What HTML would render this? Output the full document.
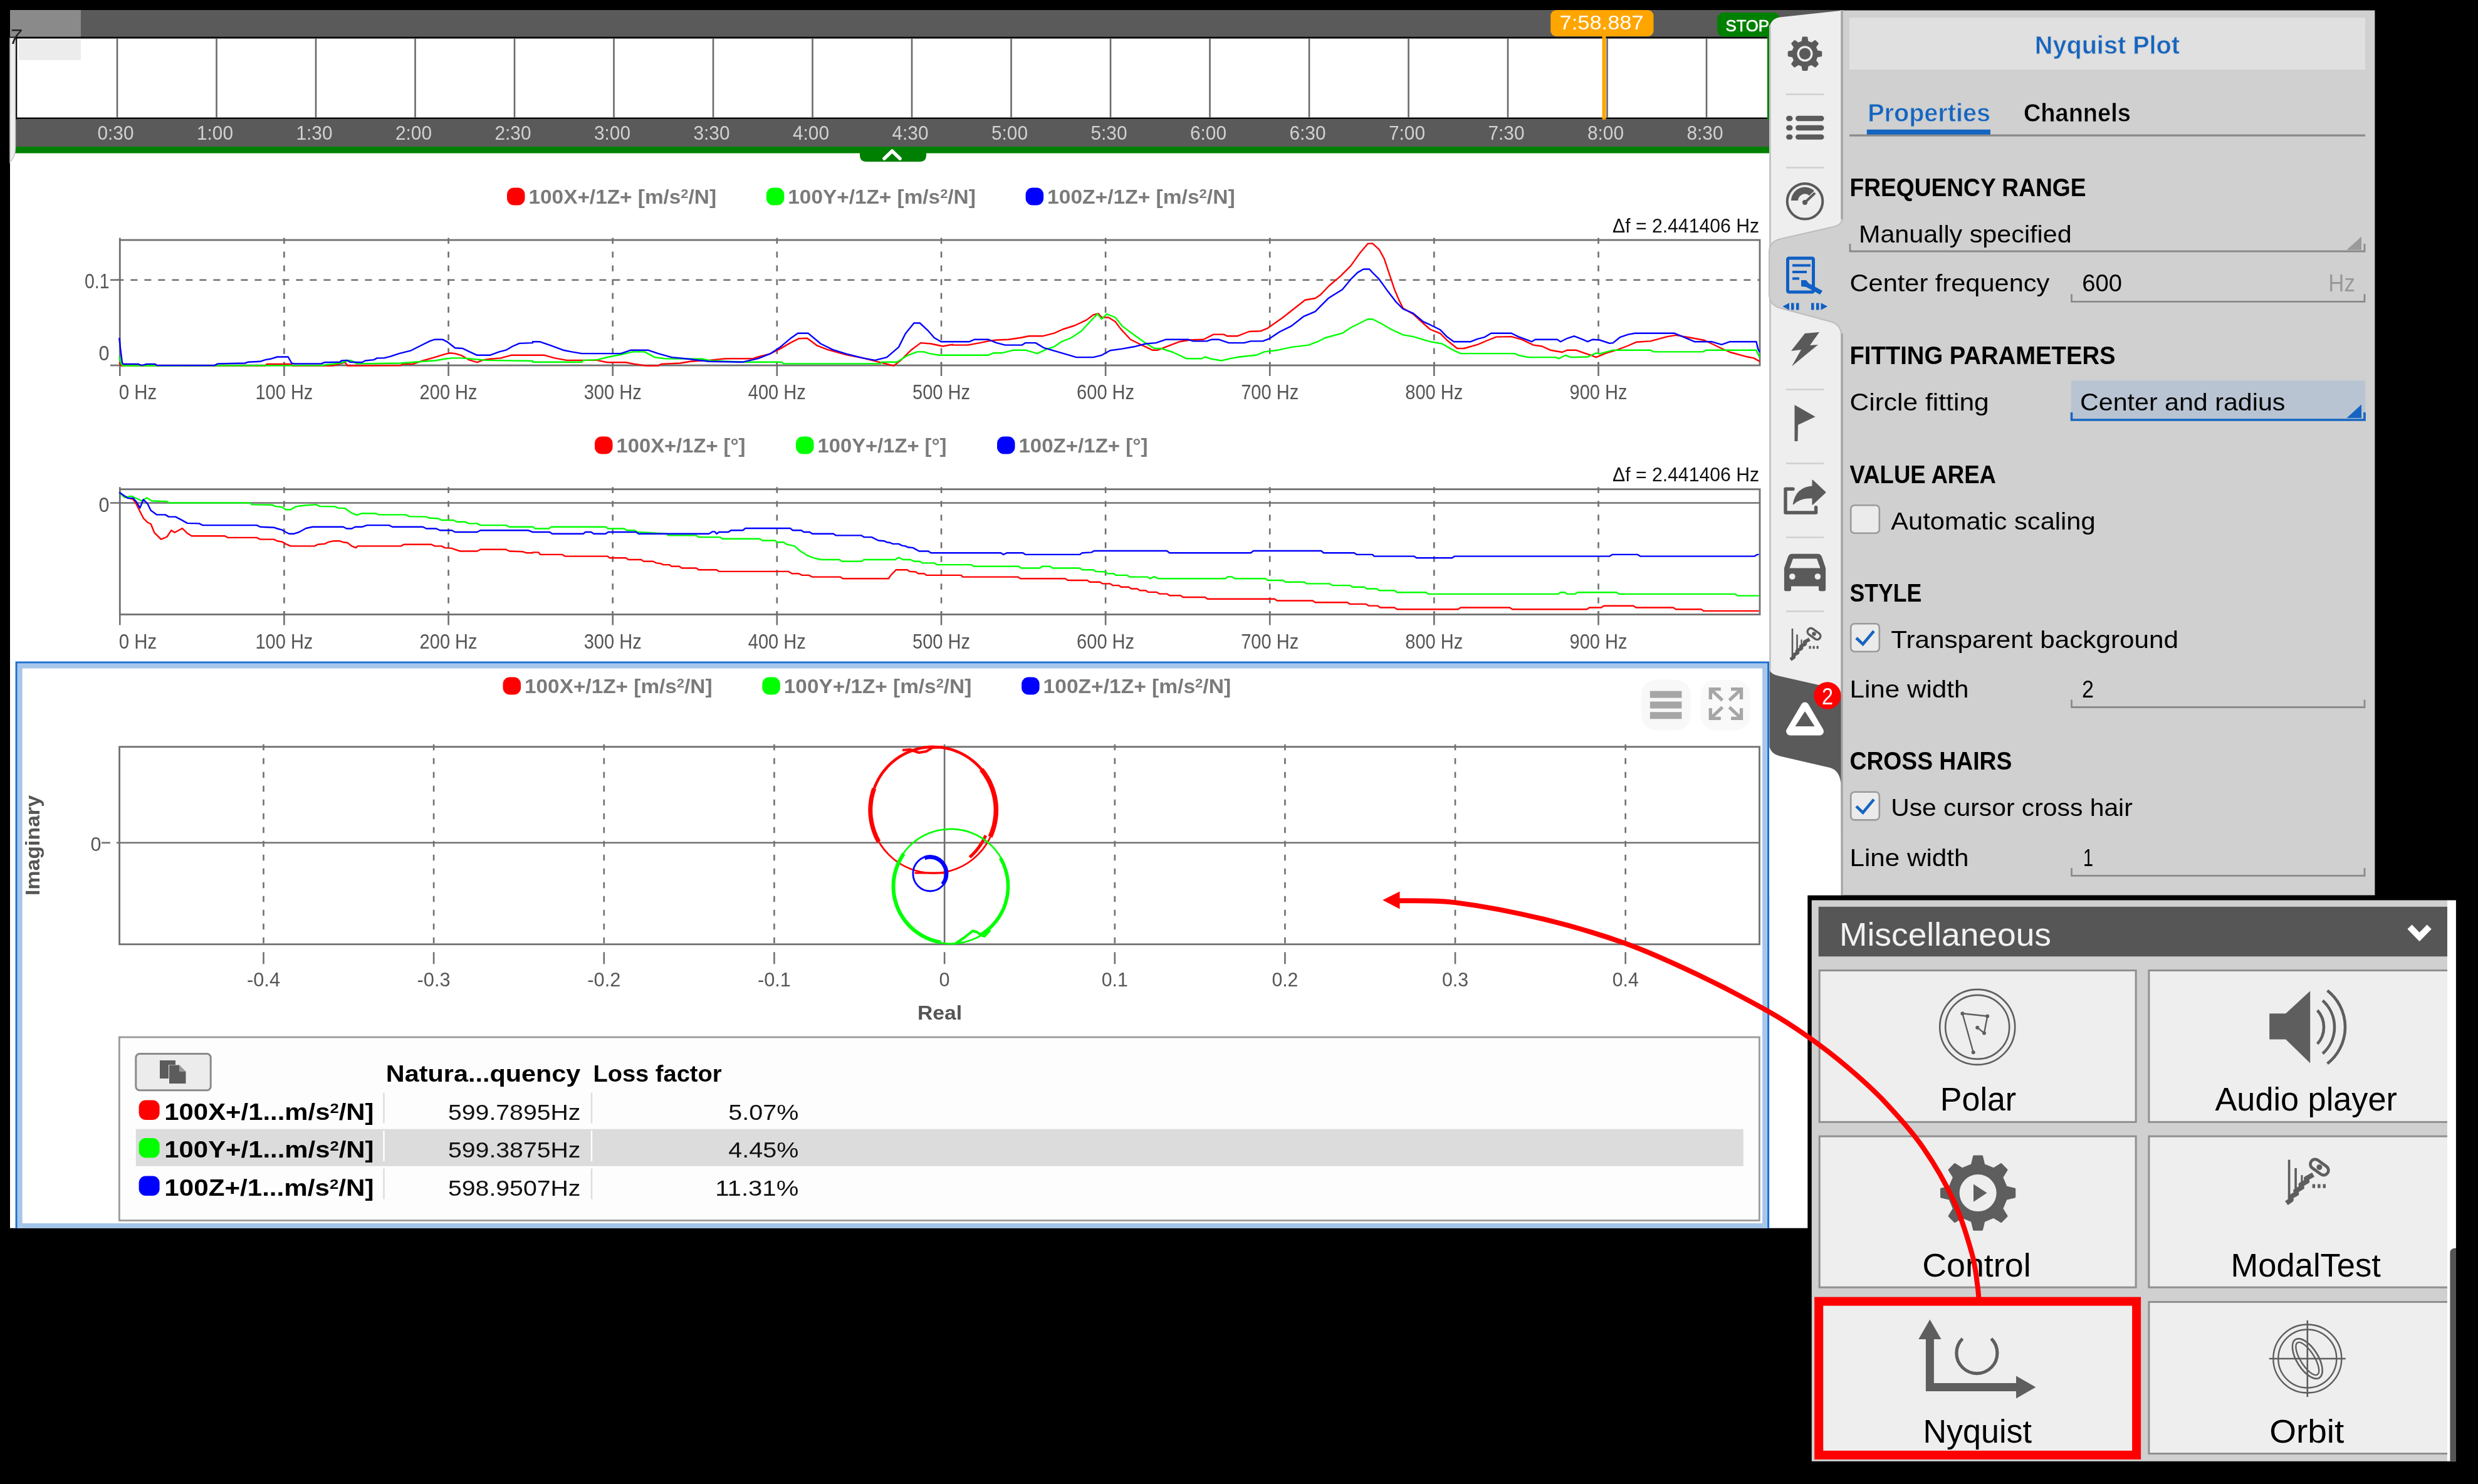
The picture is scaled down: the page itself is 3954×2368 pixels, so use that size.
<!DOCTYPE html>
<html><head><meta charset="utf-8"><title>Nyquist Plot</title>
<style>
html,body{margin:0;padding:0;background:#000;}
body{width:3954px;height:2368px;overflow:hidden;}
svg{display:block;font-family:"Liberation Sans",sans-serif;filter:blur(0.75px);}
</style></head><body>
<svg width="3954" height="2368" viewBox="0 0 3954 2368">
<defs><clipPath id="c1"><rect x="189" y="381" width="2620.5" height="204"/></clipPath></defs>
<rect x="0" y="0" width="3954" height="2368" fill="#000"/>
<rect x="16.0" y="16.0" width="2870.0" height="1943.7" fill="#ffffff" />
<rect x="16.0" y="16.0" width="2925.0" height="43.0" fill="#5a5a5a" />
<rect x="16.0" y="16.0" width="113.0" height="44.0" fill="#8a8a8a" />
<rect x="16.0" y="58.7" width="2810.0" height="2.8" fill="#000" />
<rect x="24.5" y="58.7" width="2.8" height="132.0" fill="#000" />
<rect x="30.0" y="63.0" width="99.0" height="33.0" fill="#ececec" />
<rect x="16.0" y="187.5" width="2810.0" height="3.0" fill="#000" />
<rect x="16.0" y="190.5" width="2810.0" height="44.0" fill="#5a5a5a" />
<rect x="16.0" y="234.0" width="2810.0" height="10.5" fill="#008000" />
<path d="M16,61 H24.5 V236 Q24.5,250 16,259 Z" fill="#eeeeee" stroke="#c8c8c8" stroke-width="1.5" />
<line x1="187.0" y1="61.5" x2="187.0" y2="187.5" stroke="#6a6a6a" stroke-width="2.6" />
<text x="184.5" y="223.0" font-size="31" fill="#d2d2d2" text-anchor="middle" textLength="58.0" lengthAdjust="spacingAndGlyphs" >0:30</text>
<line x1="345.5" y1="61.5" x2="345.5" y2="187.5" stroke="#6a6a6a" stroke-width="2.6" />
<text x="343.0" y="223.0" font-size="31" fill="#d2d2d2" text-anchor="middle" textLength="58.0" lengthAdjust="spacingAndGlyphs" >1:00</text>
<line x1="504.0" y1="61.5" x2="504.0" y2="187.5" stroke="#6a6a6a" stroke-width="2.6" />
<text x="501.5" y="223.0" font-size="31" fill="#d2d2d2" text-anchor="middle" textLength="58.0" lengthAdjust="spacingAndGlyphs" >1:30</text>
<line x1="662.5" y1="61.5" x2="662.5" y2="187.5" stroke="#6a6a6a" stroke-width="2.6" />
<text x="660.0" y="223.0" font-size="31" fill="#d2d2d2" text-anchor="middle" textLength="58.0" lengthAdjust="spacingAndGlyphs" >2:00</text>
<line x1="821.0" y1="61.5" x2="821.0" y2="187.5" stroke="#6a6a6a" stroke-width="2.6" />
<text x="818.5" y="223.0" font-size="31" fill="#d2d2d2" text-anchor="middle" textLength="58.0" lengthAdjust="spacingAndGlyphs" >2:30</text>
<line x1="979.5" y1="61.5" x2="979.5" y2="187.5" stroke="#6a6a6a" stroke-width="2.6" />
<text x="977.0" y="223.0" font-size="31" fill="#d2d2d2" text-anchor="middle" textLength="58.0" lengthAdjust="spacingAndGlyphs" >3:00</text>
<line x1="1138.0" y1="61.5" x2="1138.0" y2="187.5" stroke="#6a6a6a" stroke-width="2.6" />
<text x="1135.5" y="223.0" font-size="31" fill="#d2d2d2" text-anchor="middle" textLength="58.0" lengthAdjust="spacingAndGlyphs" >3:30</text>
<line x1="1296.5" y1="61.5" x2="1296.5" y2="187.5" stroke="#6a6a6a" stroke-width="2.6" />
<text x="1294.0" y="223.0" font-size="31" fill="#d2d2d2" text-anchor="middle" textLength="58.0" lengthAdjust="spacingAndGlyphs" >4:00</text>
<line x1="1455.0" y1="61.5" x2="1455.0" y2="187.5" stroke="#6a6a6a" stroke-width="2.6" />
<text x="1452.5" y="223.0" font-size="31" fill="#d2d2d2" text-anchor="middle" textLength="58.0" lengthAdjust="spacingAndGlyphs" >4:30</text>
<line x1="1613.5" y1="61.5" x2="1613.5" y2="187.5" stroke="#6a6a6a" stroke-width="2.6" />
<text x="1611.0" y="223.0" font-size="31" fill="#d2d2d2" text-anchor="middle" textLength="58.0" lengthAdjust="spacingAndGlyphs" >5:00</text>
<line x1="1772.0" y1="61.5" x2="1772.0" y2="187.5" stroke="#6a6a6a" stroke-width="2.6" />
<text x="1769.5" y="223.0" font-size="31" fill="#d2d2d2" text-anchor="middle" textLength="58.0" lengthAdjust="spacingAndGlyphs" >5:30</text>
<line x1="1930.5" y1="61.5" x2="1930.5" y2="187.5" stroke="#6a6a6a" stroke-width="2.6" />
<text x="1928.0" y="223.0" font-size="31" fill="#d2d2d2" text-anchor="middle" textLength="58.0" lengthAdjust="spacingAndGlyphs" >6:00</text>
<line x1="2089.0" y1="61.5" x2="2089.0" y2="187.5" stroke="#6a6a6a" stroke-width="2.6" />
<text x="2086.5" y="223.0" font-size="31" fill="#d2d2d2" text-anchor="middle" textLength="58.0" lengthAdjust="spacingAndGlyphs" >6:30</text>
<line x1="2247.5" y1="61.5" x2="2247.5" y2="187.5" stroke="#6a6a6a" stroke-width="2.6" />
<text x="2245.0" y="223.0" font-size="31" fill="#d2d2d2" text-anchor="middle" textLength="58.0" lengthAdjust="spacingAndGlyphs" >7:00</text>
<line x1="2406.0" y1="61.5" x2="2406.0" y2="187.5" stroke="#6a6a6a" stroke-width="2.6" />
<text x="2403.5" y="223.0" font-size="31" fill="#d2d2d2" text-anchor="middle" textLength="58.0" lengthAdjust="spacingAndGlyphs" >7:30</text>
<line x1="2564.5" y1="61.5" x2="2564.5" y2="187.5" stroke="#6a6a6a" stroke-width="2.6" />
<text x="2562.0" y="223.0" font-size="31" fill="#d2d2d2" text-anchor="middle" textLength="58.0" lengthAdjust="spacingAndGlyphs" >8:00</text>
<line x1="2723.0" y1="61.5" x2="2723.0" y2="187.5" stroke="#6a6a6a" stroke-width="2.6" />
<text x="2720.5" y="223.0" font-size="31" fill="#d2d2d2" text-anchor="middle" textLength="58.0" lengthAdjust="spacingAndGlyphs" >8:30</text>
<text x="15.0" y="70.0" font-size="34" fill="#222" font-style="italic">7</text>
<rect x="2474.2" y="16.0" width="164.3" height="42.0" fill="#ffa500" rx="9" />
<rect x="2556.5" y="56.0" width="6.1" height="134.5" fill="#ffa500" />
<text x="2488.5" y="47.3" font-size="30.5" fill="#fff" textLength="134.2" lengthAdjust="spacingAndGlyphs" >7:58.887</text>
<rect x="2740.0" y="20.0" width="100.0" height="38.5" fill="#008000" rx="10" />
<text x="2753.5" y="50.0" font-size="25.5" fill="#fff" textLength="69.5" lengthAdjust="spacingAndGlyphs" stroke="#fff" stroke-width="0.7">STOP</text>
<rect x="2819.9" y="58.7" width="3.1" height="131.8" fill="#008000" />
<path d="M1372,240 H1478 V248 Q1478,258 1468,258 H1382 Q1372,258 1372,248 Z" fill="#008000" />
<path d="M1411,253 L1423.5,241 L1436,253" fill="none" stroke="#fff" stroke-width="5.5" stroke-linecap="round" stroke-linejoin="round"/>
<rect x="809.0" y="299.5" width="28.5" height="28.0" fill="#ff0000" rx="11" />
<text x="843.5" y="324.5" font-size="32" fill="#7a7a7a" font-weight="bold" textLength="299.5" lengthAdjust="spacingAndGlyphs" >100X+/1Z+ [m/s<tspan dy="-9" font-size="21">2</tspan><tspan dy="9">/N]</tspan></text>
<rect x="1222.8" y="299.5" width="28.5" height="28.0" fill="#00ff00" rx="11" />
<text x="1257.3" y="324.5" font-size="32" fill="#7a7a7a" font-weight="bold" textLength="299.5" lengthAdjust="spacingAndGlyphs" >100Y+/1Z+ [m/s<tspan dy="-9" font-size="21">2</tspan><tspan dy="9">/N]</tspan></text>
<rect x="1636.6" y="299.5" width="28.5" height="28.0" fill="#0000ff" rx="11" />
<text x="1671.1" y="324.5" font-size="32" fill="#7a7a7a" font-weight="bold" textLength="299.5" lengthAdjust="spacingAndGlyphs" >100Z+/1Z+ [m/s<tspan dy="-9" font-size="21">2</tspan><tspan dy="9">/N]</tspan></text>
<rect x="949.0" y="696.5" width="28.5" height="28.0" fill="#ff0000" rx="11" />
<text x="983.5" y="721.5" font-size="32" fill="#7a7a7a" font-weight="bold" textLength="206.0" lengthAdjust="spacingAndGlyphs" >100X+/1Z+ [°]</text>
<rect x="1270.0" y="696.5" width="28.5" height="28.0" fill="#00ff00" rx="11" />
<text x="1304.5" y="721.5" font-size="32" fill="#7a7a7a" font-weight="bold" textLength="206.0" lengthAdjust="spacingAndGlyphs" >100Y+/1Z+ [°]</text>
<rect x="1591.0" y="696.5" width="28.5" height="28.0" fill="#0000ff" rx="11" />
<text x="1625.5" y="721.5" font-size="32" fill="#7a7a7a" font-weight="bold" textLength="206.0" lengthAdjust="spacingAndGlyphs" >100Z+/1Z+ [°]</text>
<rect x="802.5" y="1080.5" width="28.5" height="28.0" fill="#ff0000" rx="11" />
<text x="837.0" y="1105.5" font-size="32" fill="#7a7a7a" font-weight="bold" textLength="299.5" lengthAdjust="spacingAndGlyphs" >100X+/1Z+ [m/s<tspan dy="-9" font-size="21">2</tspan><tspan dy="9">/N]</tspan></text>
<rect x="1216.3" y="1080.5" width="28.5" height="28.0" fill="#00ff00" rx="11" />
<text x="1250.8" y="1105.5" font-size="32" fill="#7a7a7a" font-weight="bold" textLength="299.5" lengthAdjust="spacingAndGlyphs" >100Y+/1Z+ [m/s<tspan dy="-9" font-size="21">2</tspan><tspan dy="9">/N]</tspan></text>
<rect x="1630.1" y="1080.5" width="28.5" height="28.0" fill="#0000ff" rx="11" />
<text x="1664.6" y="1105.5" font-size="32" fill="#7a7a7a" font-weight="bold" textLength="299.5" lengthAdjust="spacingAndGlyphs" >100Z+/1Z+ [m/s<tspan dy="-9" font-size="21">2</tspan><tspan dy="9">/N]</tspan></text>
<line x1="453.4" y1="379.5" x2="453.4" y2="583.0" stroke="#707070" stroke-width="2.6" stroke-dasharray="9.5 12.5" />
<line x1="453.4" y1="578.0" x2="453.4" y2="600.0" stroke="#707070" stroke-width="2.6" />
<line x1="715.6" y1="379.5" x2="715.6" y2="583.0" stroke="#707070" stroke-width="2.6" stroke-dasharray="9.5 12.5" />
<line x1="715.6" y1="578.0" x2="715.6" y2="600.0" stroke="#707070" stroke-width="2.6" />
<line x1="977.7" y1="379.5" x2="977.7" y2="583.0" stroke="#707070" stroke-width="2.6" stroke-dasharray="9.5 12.5" />
<line x1="977.7" y1="578.0" x2="977.7" y2="600.0" stroke="#707070" stroke-width="2.6" />
<line x1="1239.8" y1="379.5" x2="1239.8" y2="583.0" stroke="#707070" stroke-width="2.6" stroke-dasharray="9.5 12.5" />
<line x1="1239.8" y1="578.0" x2="1239.8" y2="600.0" stroke="#707070" stroke-width="2.6" />
<line x1="1502.0" y1="379.5" x2="1502.0" y2="583.0" stroke="#707070" stroke-width="2.6" stroke-dasharray="9.5 12.5" />
<line x1="1502.0" y1="578.0" x2="1502.0" y2="600.0" stroke="#707070" stroke-width="2.6" />
<line x1="1764.1" y1="379.5" x2="1764.1" y2="583.0" stroke="#707070" stroke-width="2.6" stroke-dasharray="9.5 12.5" />
<line x1="1764.1" y1="578.0" x2="1764.1" y2="600.0" stroke="#707070" stroke-width="2.6" />
<line x1="2026.2" y1="379.5" x2="2026.2" y2="583.0" stroke="#707070" stroke-width="2.6" stroke-dasharray="9.5 12.5" />
<line x1="2026.2" y1="578.0" x2="2026.2" y2="600.0" stroke="#707070" stroke-width="2.6" />
<line x1="2288.3" y1="379.5" x2="2288.3" y2="583.0" stroke="#707070" stroke-width="2.6" stroke-dasharray="9.5 12.5" />
<line x1="2288.3" y1="578.0" x2="2288.3" y2="600.0" stroke="#707070" stroke-width="2.6" />
<line x1="2550.5" y1="379.5" x2="2550.5" y2="583.0" stroke="#707070" stroke-width="2.6" stroke-dasharray="9.5 12.5" />
<line x1="2550.5" y1="578.0" x2="2550.5" y2="600.0" stroke="#707070" stroke-width="2.6" />
<line x1="191.3" y1="583.0" x2="191.3" y2="600.0" stroke="#707070" stroke-width="2.6" />
<line x1="191.3" y1="379.5" x2="191.3" y2="383.0" stroke="#707070" stroke-width="2.6" />
<line x1="186.4" y1="446.7" x2="2808.0" y2="446.7" stroke="#707070" stroke-width="2.6" stroke-dasharray="11 11" />
<line x1="176.0" y1="446.7" x2="191.3" y2="446.7" stroke="#707070" stroke-width="2.6" />
<rect x="191.3" y="383" width="2616.7" height="200" fill="none" stroke="#707070" stroke-width="2.8"/>
<text x="189.8" y="637.0" font-size="33" fill="#555" textLength="60.5" lengthAdjust="spacingAndGlyphs" >0 Hz</text>
<text x="453.4" y="637.0" font-size="33" fill="#555" text-anchor="middle" textLength="92.0" lengthAdjust="spacingAndGlyphs" >100 Hz</text>
<text x="715.6" y="637.0" font-size="33" fill="#555" text-anchor="middle" textLength="92.0" lengthAdjust="spacingAndGlyphs" >200 Hz</text>
<text x="977.7" y="637.0" font-size="33" fill="#555" text-anchor="middle" textLength="92.0" lengthAdjust="spacingAndGlyphs" >300 Hz</text>
<text x="1239.8" y="637.0" font-size="33" fill="#555" text-anchor="middle" textLength="92.0" lengthAdjust="spacingAndGlyphs" >400 Hz</text>
<text x="1502.0" y="637.0" font-size="33" fill="#555" text-anchor="middle" textLength="92.0" lengthAdjust="spacingAndGlyphs" >500 Hz</text>
<text x="1764.1" y="637.0" font-size="33" fill="#555" text-anchor="middle" textLength="92.0" lengthAdjust="spacingAndGlyphs" >600 Hz</text>
<text x="2026.2" y="637.0" font-size="33" fill="#555" text-anchor="middle" textLength="92.0" lengthAdjust="spacingAndGlyphs" >700 Hz</text>
<text x="2288.3" y="637.0" font-size="33" fill="#555" text-anchor="middle" textLength="92.0" lengthAdjust="spacingAndGlyphs" >800 Hz</text>
<text x="2550.5" y="637.0" font-size="33" fill="#555" text-anchor="middle" textLength="92.0" lengthAdjust="spacingAndGlyphs" >900 Hz</text>
<line x1="176.0" y1="583.0" x2="191.3" y2="583.0" stroke="#707070" stroke-width="2.6" />
<text x="174.5" y="459.5" font-size="33" fill="#555" text-anchor="end" textLength="39.5" lengthAdjust="spacingAndGlyphs" >0.1</text>
<text x="174.5" y="574.5" font-size="33" fill="#555" text-anchor="end" textLength="17.0" lengthAdjust="spacingAndGlyphs" >0</text>
<text x="2807.0" y="370.8" font-size="32" fill="#111" text-anchor="end" textLength="234.0" lengthAdjust="spacingAndGlyphs" >Δf = 2.441406 Hz</text>
<g clip-path="url(#c1)">
<polyline points="190.3,578.2 193.5,583.6 423.3,583.6 426.0,580.9 463.9,580.9 466.6,583.6 531.5,583.6 542.3,580.9 550.4,578.2 554.5,583.6 639.6,583.1 642.3,580.9 658.6,580.9 674.8,575.5 693.7,570.1 709.9,565.2 718.1,563.3 726.2,564.1 737.0,567.4 747.8,574.1 761.3,578.2 772.1,574.1 782.9,572.8 799.2,571.4 815.4,566.8 850.0,566.8 850.0,566.8 868.9,566.8 885.1,571.4 904.1,574.9 952.7,574.9 969.0,578.2 998.7,578.2 1012.2,580.9 1031.2,583.6 1050.1,583.6 1055.5,580.9 1085.2,579.5 1101.5,576.8 1131.2,574.9 1158.2,572.2 1201.5,572.2 1209.6,569.5 1228.5,564.7 1244.8,556.6 1261.0,547.1 1274.5,540.3 1288.0,539.8 1304.2,551.7 1320.5,557.9 1350.2,566.0 1377.2,571.4 1398.9,576.8 1415.1,580.9 1425.9,583.6 1436.7,575.5 1452.9,559.3 1469.2,547.1 1485.4,548.5 1504.3,552.5 1520.0,549.8 1520.0,550.6 1544.3,550.6 1563.3,547.1 1576.8,544.4 1590.3,542.5 1609.2,541.7 1628.2,539.0 1641.7,536.3 1663.3,536.3 1682.2,531.7 1695.7,525.5 1714.7,519.5 1733.6,510.6 1744.4,502.5 1752.5,500.3 1757.9,506.5 1768.7,506.5 1779.6,513.3 1787.7,524.1 1803.9,541.7 1820.1,549.8 1839.0,558.7 1847.2,558.7 1860.7,553.3 1882.3,545.2 1898.5,542.5 1920.2,541.7 1936.4,533.6 1952.6,533.6 1958.0,536.3 1974.2,536.3 1993.2,529.0 2012.1,528.2 2022.9,523.6 2047.2,506.5 2060.8,495.7 2082.4,478.7 2098.6,476.0 2106.7,470.6 2120.2,456.5 2139.2,440.3 2155.4,424.1 2168.9,405.1 2182.4,388.9 2190.0,388.4 2190.0,388.4 2200.8,398.4 2208.9,413.3 2217.0,437.6 2225.1,461.9 2233.3,480.9 2238.7,491.7 2254.9,501.1 2271.1,516.0 2281.9,525.5 2298.2,532.2 2309.0,543.0 2325.2,556.0 2336.0,556.0 2357.6,549.8 2373.9,543.0 2387.4,537.6 2411.7,537.1 2427.9,541.7 2446.9,550.6 2460.4,552.5 2473.9,558.7 2492.8,562.0 2500.9,558.7 2514.5,558.7 2528.0,563.3 2538.8,566.8 2546.9,570.1 2563.1,563.3 2579.3,558.7 2595.6,552.5 2611.8,545.7 2633.4,544.4 2660.5,537.1 2674.0,534.9 2698.3,539.0 2719.9,543.0 2747.0,556.0 2760.5,562.0 2784.8,568.7 2798.4,571.4 2807.8,576.8" fill="none" stroke="#ff0000" stroke-width="2.4" stroke-linejoin="round" />
<polyline points="190.3,568.7 193.5,580.9 196.2,583.6 512.6,583.1 542.3,579.5 558.5,574.9 563.9,576.8 569.3,580.4 639.6,579.5 674.8,576.8 693.7,575.5 709.9,572.8 720.8,571.4 737.0,571.4 747.8,572.2 774.8,574.9 850.0,576.0 850.0,577.7 928.4,577.7 931.1,574.9 952.7,574.1 971.7,569.5 996.0,564.7 1009.5,561.4 1028.5,561.4 1044.7,570.1 1060.9,572.2 1120.4,572.8 1133.9,575.5 1185.3,577.7 1247.5,577.7 1250.2,580.4 1404.3,580.4 1407.0,577.7 1431.3,577.7 1447.5,567.4 1463.8,561.4 1474.6,561.4 1482.7,564.1 1498.9,566.8 1520.0,566.8 1520.0,566.8 1576.8,566.8 1584.9,563.3 1598.4,563.3 1617.3,558.7 1636.3,558.7 1655.2,564.1 1671.4,556.6 1682.2,553.3 1693.0,545.7 1709.3,539.0 1725.5,528.2 1741.7,510.6 1751.2,501.1 1757.9,509.2 1766.0,501.1 1779.6,506.5 1790.4,520.1 1806.6,532.2 1825.5,545.7 1841.8,556.0 1852.6,556.0 1871.5,562.0 1893.1,572.2 1917.5,572.2 1922.9,569.5 1931.0,572.2 1948.6,575.5 1963.4,572.2 1976.9,569.5 2004.0,566.8 2017.5,561.4 2039.1,558.7 2060.8,553.9 2087.8,550.6 2101.3,545.7 2114.8,539.0 2141.9,531.7 2155.4,522.8 2168.9,516.0 2182.4,509.2 2190.0,509.2 2190.0,509.2 2203.5,516.0 2219.7,525.5 2238.7,534.4 2254.9,537.1 2281.9,545.2 2300.9,548.5 2317.1,557.9 2330.6,564.1 2417.1,564.1 2422.5,566.8 2438.7,570.1 2482.0,570.1 2487.4,572.2 2498.2,566.8 2506.3,570.1 2533.4,569.5 2546.9,563.3 2552.3,564.7 2573.9,558.7 2633.4,558.7 2638.8,561.4 2717.2,561.4 2722.6,558.7 2802.4,558.7 2805.1,564.7 2807.8,570.1" fill="none" stroke="#00ff00" stroke-width="2.4" stroke-linejoin="round" />
<polyline points="190.3,539.0 192.2,556.6 194.9,578.2 196.2,580.9 220.6,580.9 226.0,583.1 234.1,580.9 247.6,580.9 250.3,583.1 342.2,583.1 347.6,580.4 390.9,579.5 396.3,577.7 415.2,576.8 423.3,574.1 431.5,572.8 442.3,569.5 459.8,569.5 465.3,579.5 469.3,580.4 512.6,580.4 518.0,578.2 542.3,577.7 545.0,575.5 554.5,574.9 558.5,577.7 577.5,578.2 582.9,575.5 596.4,574.1 601.8,571.4 612.6,571.4 623.4,568.7 636.9,564.1 655.9,559.3 674.8,549.8 685.6,544.4 693.7,541.7 705.9,541.7 714.0,545.7 726.2,555.2 738.3,556.0 747.8,560.6 761.3,566.8 781.6,566.8 796.5,561.4 807.3,558.7 818.1,552.5 828.9,547.9 850.0,547.1 850.0,545.2 860.8,545.2 877.0,550.6 898.7,558.7 912.2,561.4 928.4,564.1 990.6,564.1 1006.8,558.7 1033.9,558.7 1050.1,564.1 1071.7,570.1 1093.3,572.2 1131.2,576.8 1185.3,577.7 1209.6,572.2 1228.5,564.7 1244.8,553.9 1261.0,540.3 1273.1,531.7 1289.4,531.7 1309.6,548.5 1328.6,557.9 1350.2,564.7 1377.2,571.4 1396.2,574.9 1415.1,570.1 1434.0,553.9 1444.8,532.2 1458.4,515.5 1467.8,515.5 1480.0,526.8 1490.8,539.0 1501.6,545.2 1520.0,545.2 1520.0,545.2 1547.0,545.2 1555.1,541.7 1576.8,541.7 1590.3,547.1 1603.8,550.6 1630.9,550.6 1636.3,547.1 1652.5,547.1 1666.0,555.2 1687.6,561.4 1706.6,566.8 1717.4,570.1 1744.4,570.1 1757.9,566.8 1771.5,559.3 1790.4,556.6 1809.3,553.3 1828.2,548.5 1844.5,547.1 1860.7,541.7 1895.8,541.7 1903.9,544.4 1925.6,544.4 1933.7,541.7 1944.5,541.7 1960.7,547.1 1985.1,547.1 1995.9,544.4 2014.8,544.4 2025.6,540.3 2041.8,529.5 2060.8,520.1 2079.7,505.2 2098.6,497.1 2120.2,475.4 2141.9,461.9 2155.4,445.7 2166.2,434.9 2175.7,429.5 2185.1,429.5 2190.0,434.9 2190.0,434.9 2200.8,445.7 2214.3,464.6 2227.9,482.2 2238.7,493.0 2254.9,499.8 2271.1,513.3 2281.9,518.2 2298.2,526.3 2309.0,537.6 2319.8,545.2 2346.8,545.2 2357.6,540.9 2368.5,538.2 2379.3,531.7 2411.7,531.7 2422.5,537.1 2444.2,545.2 2449.6,541.7 2484.7,541.7 2490.1,545.2 2500.9,539.8 2511.8,536.3 2525.3,541.7 2533.4,545.2 2541.5,541.7 2552.3,542.5 2568.5,547.9 2573.9,547.1 2584.8,538.2 2598.3,533.6 2609.1,531.7 2671.3,531.7 2684.8,537.1 2703.7,545.2 2730.8,545.2 2747.0,549.8 2760.5,545.2 2802.4,545.2 2805.1,556.6 2807.8,562.0" fill="none" stroke="#0000ff" stroke-width="2.4" stroke-linejoin="round" />
</g>
<line x1="453.4" y1="777.2" x2="453.4" y2="980.5" stroke="#707070" stroke-width="2.6" stroke-dasharray="9.5 12.5" />
<line x1="453.4" y1="975.5" x2="453.4" y2="997.5" stroke="#707070" stroke-width="2.6" />
<line x1="715.6" y1="777.2" x2="715.6" y2="980.5" stroke="#707070" stroke-width="2.6" stroke-dasharray="9.5 12.5" />
<line x1="715.6" y1="975.5" x2="715.6" y2="997.5" stroke="#707070" stroke-width="2.6" />
<line x1="977.7" y1="777.2" x2="977.7" y2="980.5" stroke="#707070" stroke-width="2.6" stroke-dasharray="9.5 12.5" />
<line x1="977.7" y1="975.5" x2="977.7" y2="997.5" stroke="#707070" stroke-width="2.6" />
<line x1="1239.8" y1="777.2" x2="1239.8" y2="980.5" stroke="#707070" stroke-width="2.6" stroke-dasharray="9.5 12.5" />
<line x1="1239.8" y1="975.5" x2="1239.8" y2="997.5" stroke="#707070" stroke-width="2.6" />
<line x1="1502.0" y1="777.2" x2="1502.0" y2="980.5" stroke="#707070" stroke-width="2.6" stroke-dasharray="9.5 12.5" />
<line x1="1502.0" y1="975.5" x2="1502.0" y2="997.5" stroke="#707070" stroke-width="2.6" />
<line x1="1764.1" y1="777.2" x2="1764.1" y2="980.5" stroke="#707070" stroke-width="2.6" stroke-dasharray="9.5 12.5" />
<line x1="1764.1" y1="975.5" x2="1764.1" y2="997.5" stroke="#707070" stroke-width="2.6" />
<line x1="2026.2" y1="777.2" x2="2026.2" y2="980.5" stroke="#707070" stroke-width="2.6" stroke-dasharray="9.5 12.5" />
<line x1="2026.2" y1="975.5" x2="2026.2" y2="997.5" stroke="#707070" stroke-width="2.6" />
<line x1="2288.3" y1="777.2" x2="2288.3" y2="980.5" stroke="#707070" stroke-width="2.6" stroke-dasharray="9.5 12.5" />
<line x1="2288.3" y1="975.5" x2="2288.3" y2="997.5" stroke="#707070" stroke-width="2.6" />
<line x1="2550.5" y1="777.2" x2="2550.5" y2="980.5" stroke="#707070" stroke-width="2.6" stroke-dasharray="9.5 12.5" />
<line x1="2550.5" y1="975.5" x2="2550.5" y2="997.5" stroke="#707070" stroke-width="2.6" />
<line x1="191.3" y1="980.5" x2="191.3" y2="997.5" stroke="#707070" stroke-width="2.6" />
<line x1="191.3" y1="777.2" x2="191.3" y2="780.7" stroke="#707070" stroke-width="2.6" />
<line x1="176.0" y1="802.5" x2="2808.0" y2="802.5" stroke="#707070" stroke-width="2.6" />
<rect x="191.3" y="780.7" width="2616.7" height="199.79999999999995" fill="none" stroke="#707070" stroke-width="2.8"/>
<text x="189.8" y="1034.5" font-size="33" fill="#555" textLength="60.5" lengthAdjust="spacingAndGlyphs" >0 Hz</text>
<text x="453.4" y="1034.5" font-size="33" fill="#555" text-anchor="middle" textLength="92.0" lengthAdjust="spacingAndGlyphs" >100 Hz</text>
<text x="715.6" y="1034.5" font-size="33" fill="#555" text-anchor="middle" textLength="92.0" lengthAdjust="spacingAndGlyphs" >200 Hz</text>
<text x="977.7" y="1034.5" font-size="33" fill="#555" text-anchor="middle" textLength="92.0" lengthAdjust="spacingAndGlyphs" >300 Hz</text>
<text x="1239.8" y="1034.5" font-size="33" fill="#555" text-anchor="middle" textLength="92.0" lengthAdjust="spacingAndGlyphs" >400 Hz</text>
<text x="1502.0" y="1034.5" font-size="33" fill="#555" text-anchor="middle" textLength="92.0" lengthAdjust="spacingAndGlyphs" >500 Hz</text>
<text x="1764.1" y="1034.5" font-size="33" fill="#555" text-anchor="middle" textLength="92.0" lengthAdjust="spacingAndGlyphs" >600 Hz</text>
<text x="2026.2" y="1034.5" font-size="33" fill="#555" text-anchor="middle" textLength="92.0" lengthAdjust="spacingAndGlyphs" >700 Hz</text>
<text x="2288.3" y="1034.5" font-size="33" fill="#555" text-anchor="middle" textLength="92.0" lengthAdjust="spacingAndGlyphs" >800 Hz</text>
<text x="2550.5" y="1034.5" font-size="33" fill="#555" text-anchor="middle" textLength="92.0" lengthAdjust="spacingAndGlyphs" >900 Hz</text>
<text x="174.5" y="817.0" font-size="33" fill="#555" text-anchor="end" textLength="17.0" lengthAdjust="spacingAndGlyphs" >0</text>
<text x="2807.0" y="768.4" font-size="32" fill="#111" text-anchor="end" textLength="234.0" lengthAdjust="spacingAndGlyphs" >Δf = 2.441406 Hz</text>
<polyline points="190.3,785.7 196.2,790.3 204.3,794.9 212.4,796.5 217.9,805.1 223.3,816.0 228.7,826.8 235.4,833.5 240.8,836.2 246.2,849.8 257.1,860.6 266.5,856.5 273.3,846.2 278.7,849.8 290.9,843.0 299.0,851.1 305.7,855.2 358.5,855.2 363.9,857.9 409.8,857.9 415.2,860.6 436.9,860.6 442.3,863.3 450.4,864.6 455.8,867.9 463.9,871.4 501.8,871.4 507.2,868.7 518.0,867.9 523.4,865.2 531.5,863.3 542.3,863.3 547.7,865.2 554.5,866.0 561.2,871.4 568.0,874.1 570.7,871.4 639.6,871.4 645.1,868.7 688.3,868.7 693.7,871.4 704.5,871.4 709.9,874.1 720.8,874.9 726.2,876.8 734.3,879.5 761.3,879.5 766.7,876.8 807.3,876.8 812.7,879.5 834.3,880.3 839.7,882.2 850.0,882.2 850.0,881.4 859.5,881.4 862.2,884.9 897.3,884.9 901.4,887.6 969.0,887.6 973.0,890.3 998.7,890.3 1002.8,893.0 1023.0,893.0 1027.1,895.7 1042.0,895.7 1047.4,898.4 1054.1,899.2 1058.2,901.1 1067.7,901.1 1071.7,903.8 1083.9,903.8 1087.9,906.5 1110.9,906.5 1115.0,909.2 1143.4,909.2 1147.4,911.9 1258.3,911.9 1263.7,915.2 1274.5,915.2 1279.9,917.9 1290.7,917.9 1296.1,920.6 1340.7,920.6 1344.8,923.3 1417.8,923.3 1421.9,917.4 1430.0,909.2 1447.5,909.2 1451.6,911.9 1461.1,912.5 1465.1,915.2 1474.6,915.2 1478.6,917.9 1520.0,917.9 1520.0,917.9 1533.5,917.9 1536.2,920.6 1624.1,920.6 1628.2,923.3 1699.8,923.3 1703.9,926.0 1735.0,926.0 1739.0,928.7 1755.2,928.7 1759.3,931.4 1771.5,931.4 1775.5,934.1 1785.0,934.1 1789.0,936.8 1801.2,936.8 1805.3,939.5 1814.7,939.5 1818.8,942.2 1828.2,942.2 1832.3,944.9 1845.8,944.9 1849.9,947.6 1862.0,947.6 1866.1,950.3 1883.7,950.3 1887.7,953.0 1922.9,953.0 1926.9,955.8 2033.7,955.8 2037.8,958.5 2094.6,958.5 2098.6,961.2 2150.0,961.2 2154.0,963.9 2179.7,963.9 2183.8,966.6 2190.0,966.6 2190.0,966.6 2198.1,966.6 2202.2,969.5 2225.1,969.5 2229.2,972.2 2326.5,972.2 2330.6,969.5 2409.0,969.5 2413.1,972.2 2532.0,972.2 2536.1,969.5 2555.0,969.5 2559.1,966.8 2606.4,966.8 2610.4,969.5 2669.9,969.5 2674.0,972.2 2714.5,972.2 2718.6,974.9 2806.5,974.9" fill="none" stroke="#ff0000" stroke-width="2.4" stroke-linejoin="round" />
<polyline points="190.3,785.7 198.9,793.8 209.7,791.6 220.6,796.5 226.0,799.2 234.1,794.3 242.2,799.2 266.5,800.3 269.2,802.4 399.0,802.4 401.7,805.1 434.2,805.7 439.6,807.9 450.4,809.2 455.8,813.3 463.9,813.3 472.0,808.4 485.5,806.5 504.5,805.1 509.9,807.9 534.2,808.4 539.6,810.6 550.4,811.1 561.2,818.7 569.3,821.9 577.5,819.2 599.1,819.2 604.5,821.4 647.8,821.4 653.2,824.1 680.2,824.6 685.6,826.8 699.1,827.3 704.5,830.0 723.5,830.0 728.9,832.7 742.4,832.7 747.8,835.4 761.3,835.4 766.7,838.1 807.3,838.1 812.7,840.8 850.0,840.8 850.0,840.8 854.1,843.5 875.7,843.5 879.7,840.8 966.3,840.8 970.3,843.5 996.0,843.5 1000.1,846.2 1012.2,846.2 1017.6,849.0 1063.6,851.7 1066.3,854.4 1110.9,854.4 1115.0,857.1 1148.8,857.1 1152.8,859.8 1212.3,859.8 1216.4,862.5 1236.6,862.5 1240.7,865.2 1250.2,865.2 1255.6,868.7 1267.7,871.4 1277.2,879.5 1288.0,886.3 1298.8,890.3 1309.6,893.0 1339.4,893.0 1343.4,895.7 1374.5,895.7 1378.6,893.0 1428.6,893.0 1434.0,889.5 1440.8,893.0 1452.9,893.0 1458.4,895.7 1467.8,895.7 1471.9,898.4 1490.8,898.4 1494.9,901.1 1520.0,901.1 1520.0,901.1 1549.7,901.1 1553.8,903.8 1625.4,903.8 1629.5,906.5 1659.2,906.5 1663.3,903.8 1675.5,903.8 1679.5,906.5 1722.8,906.5 1726.8,909.2 1744.4,909.2 1748.5,911.9 1763.3,912.5 1767.4,915.2 1776.9,915.2 1780.9,917.9 1798.5,917.9 1802.5,920.6 1830.9,920.6 1835.0,923.3 1841.8,920.1 1848.5,923.3 1955.3,923.3 1959.4,920.1 1966.1,920.6 1970.2,923.3 2018.9,923.3 2022.9,926.0 2047.2,926.0 2051.3,928.7 2081.0,928.7 2085.1,931.4 2121.6,931.4 2125.7,934.1 2154.0,934.1 2158.1,936.8 2177.0,936.8 2181.1,939.5 2190.0,939.5 2190.0,939.5 2196.8,939.5 2200.8,942.2 2225.1,942.2 2229.2,945.2 2275.2,945.2 2279.2,947.9 2486.1,947.9 2490.1,945.2 2496.9,945.2 2500.9,947.9 2513.1,947.9 2517.2,945.2 2579.3,945.2 2583.4,947.9 2768.6,947.9 2772.7,950.6 2806.5,950.6" fill="none" stroke="#00ff00" stroke-width="2.4" stroke-linejoin="round" />
<polyline points="190.3,785.7 198.9,791.6 204.3,794.9 212.4,794.9 217.9,801.1 223.3,810.6 228.7,797.0 235.4,803.8 240.8,814.6 250.3,821.4 263.8,821.4 269.2,824.6 280.0,824.6 288.2,828.9 299.0,834.9 317.9,835.4 323.3,838.1 409.8,838.1 415.2,840.8 436.9,841.7 442.3,843.5 450.4,845.7 455.8,849.0 461.2,851.7 469.3,851.7 477.4,849.0 488.2,843.0 499.0,840.8 547.7,840.8 553.1,843.5 561.2,843.5 566.6,840.8 577.5,840.8 585.6,838.1 620.7,838.1 626.1,840.8 674.8,840.8 680.2,843.5 696.4,843.5 701.8,846.2 720.8,846.2 726.2,849.0 761.3,849.0 766.7,846.2 842.4,846.2 850.0,849.0 850.0,849.0 877.0,849.0 881.1,851.7 931.1,851.7 933.8,849.0 943.3,849.0 947.3,851.7 966.3,851.7 970.3,849.0 1014.9,849.0 1019.0,851.7 1131.2,851.7 1136.6,848.4 1140.7,848.4 1143.4,851.7 1147.4,849.0 1162.3,849.0 1166.3,846.2 1185.3,846.2 1189.3,843.0 1261.0,843.0 1265.0,846.2 1278.6,846.2 1282.6,849.0 1292.1,849.0 1296.1,851.7 1329.9,851.7 1334.0,854.4 1374.5,854.4 1378.6,857.1 1390.8,857.1 1401.6,862.5 1411.0,863.3 1415.1,865.2 1420.5,866.0 1424.6,867.9 1434.0,867.9 1439.4,870.6 1444.8,871.4 1448.9,873.3 1457.0,874.1 1466.5,879.5 1481.3,879.5 1485.4,882.2 1520.0,882.2 1520.0,882.2 1597.1,882.2 1601.1,884.9 1606.5,882.2 1632.2,882.2 1636.3,884.9 1722.8,884.9 1726.8,882.2 1741.7,881.4 1745.8,879.0 1862.0,879.0 1866.1,882.2 1995.9,882.2 1999.9,879.0 2108.1,879.0 2112.1,882.2 2160.8,882.2 2164.9,884.9 2190.0,884.9 2190.0,884.9 2192.7,887.6 2256.2,887.6 2260.3,890.3 2317.1,890.3 2321.1,887.6 2568.5,887.6 2572.6,884.9 2613.1,884.9 2617.2,887.6 2799.7,887.6 2803.8,884.9 2806.5,884.9" fill="none" stroke="#0000ff" stroke-width="2.4" stroke-linejoin="round" />
<rect x="27.5" y="1952.0" width="2793.0" height="7.7" fill="#a2c4e8" />
<path d="M31.7,1959.7 V1062.5 H2816.1 V1959.7" fill="none" stroke="#a7c7ea" stroke-width="8" />
<path d="M26.1,1959.7 V1057 H2821.6 V1959.7" fill="none" stroke="#1b6fd1" stroke-width="3" />
<rect x="2618.7" y="1084.4" width="79.0" height="81.0" fill="#f8f8f8" rx="24" />
<rect x="2632.8" y="1102.6" width="50.6" height="11.0" fill="#a6a6a6" />
<rect x="2632.8" y="1119.5" width="50.6" height="11.0" fill="#a6a6a6" />
<rect x="2632.8" y="1136.2" width="50.6" height="11.0" fill="#a6a6a6" />
<rect x="2713.7" y="1084.4" width="79.0" height="81.0" fill="#f9f9f9" rx="24" />
<line x1="2748.4" y1="1117.5" x2="2729.3" y2="1099.6" stroke="#a6a6a6" stroke-width="5.2" />
<path d="M2745.8,1099.6 H2729.3 V1116.1" fill="none" stroke="#a6a6a6" stroke-width="5.4" stroke-linecap="butt" stroke-linejoin="miter"/>
<line x1="2759.4" y1="1117.5" x2="2778.5" y2="1099.6" stroke="#a6a6a6" stroke-width="5.2" />
<path d="M2762.0,1099.6 H2778.5 V1116.1" fill="none" stroke="#a6a6a6" stroke-width="5.4" stroke-linecap="butt" stroke-linejoin="miter"/>
<line x1="2748.4" y1="1128.5" x2="2729.3" y2="1146.4" stroke="#a6a6a6" stroke-width="5.2" />
<path d="M2745.8,1146.4 H2729.3 V1129.9" fill="none" stroke="#a6a6a6" stroke-width="5.4" stroke-linecap="butt" stroke-linejoin="miter"/>
<line x1="2759.4" y1="1128.5" x2="2778.5" y2="1146.4" stroke="#a6a6a6" stroke-width="5.2" />
<path d="M2762.0,1146.4 H2778.5 V1129.9" fill="none" stroke="#a6a6a6" stroke-width="5.4" stroke-linecap="butt" stroke-linejoin="miter"/>
<line x1="420.5" y1="1187.7" x2="420.5" y2="1506.8" stroke="#707070" stroke-width="2.6" stroke-dasharray="9.5 12.5" />
<line x1="420.5" y1="1519.3" x2="420.5" y2="1538.3" stroke="#707070" stroke-width="2.6" />
<text x="420.5" y="1573.8" font-size="31" fill="#555" text-anchor="middle" textLength="53.0" lengthAdjust="spacingAndGlyphs" >-0.4</text>
<line x1="692.1" y1="1187.7" x2="692.1" y2="1506.8" stroke="#707070" stroke-width="2.6" stroke-dasharray="9.5 12.5" />
<line x1="692.1" y1="1519.3" x2="692.1" y2="1538.3" stroke="#707070" stroke-width="2.6" />
<text x="692.1" y="1573.8" font-size="31" fill="#555" text-anchor="middle" textLength="53.0" lengthAdjust="spacingAndGlyphs" >-0.3</text>
<line x1="963.8" y1="1187.7" x2="963.8" y2="1506.8" stroke="#707070" stroke-width="2.6" stroke-dasharray="9.5 12.5" />
<line x1="963.8" y1="1519.3" x2="963.8" y2="1538.3" stroke="#707070" stroke-width="2.6" />
<text x="963.8" y="1573.8" font-size="31" fill="#555" text-anchor="middle" textLength="53.0" lengthAdjust="spacingAndGlyphs" >-0.2</text>
<line x1="1235.4" y1="1187.7" x2="1235.4" y2="1506.8" stroke="#707070" stroke-width="2.6" stroke-dasharray="9.5 12.5" />
<line x1="1235.4" y1="1519.3" x2="1235.4" y2="1538.3" stroke="#707070" stroke-width="2.6" />
<text x="1235.4" y="1573.8" font-size="31" fill="#555" text-anchor="middle" textLength="53.0" lengthAdjust="spacingAndGlyphs" >-0.1</text>
<line x1="1507.1" y1="1187.7" x2="1507.1" y2="1506.8" stroke="#707070" stroke-width="2.6" />
<line x1="1507.1" y1="1519.3" x2="1507.1" y2="1538.3" stroke="#707070" stroke-width="2.6" />
<text x="1507.1" y="1573.8" font-size="31" fill="#555" text-anchor="middle" textLength="17.0" lengthAdjust="spacingAndGlyphs" >0</text>
<line x1="1778.8" y1="1187.7" x2="1778.8" y2="1506.8" stroke="#707070" stroke-width="2.6" stroke-dasharray="9.5 12.5" />
<line x1="1778.8" y1="1519.3" x2="1778.8" y2="1538.3" stroke="#707070" stroke-width="2.6" />
<text x="1778.8" y="1573.8" font-size="31" fill="#555" text-anchor="middle" textLength="42.0" lengthAdjust="spacingAndGlyphs" >0.1</text>
<line x1="2050.4" y1="1187.7" x2="2050.4" y2="1506.8" stroke="#707070" stroke-width="2.6" stroke-dasharray="9.5 12.5" />
<line x1="2050.4" y1="1519.3" x2="2050.4" y2="1538.3" stroke="#707070" stroke-width="2.6" />
<text x="2050.4" y="1573.8" font-size="31" fill="#555" text-anchor="middle" textLength="42.0" lengthAdjust="spacingAndGlyphs" >0.2</text>
<line x1="2322.0" y1="1187.7" x2="2322.0" y2="1506.8" stroke="#707070" stroke-width="2.6" stroke-dasharray="9.5 12.5" />
<line x1="2322.0" y1="1519.3" x2="2322.0" y2="1538.3" stroke="#707070" stroke-width="2.6" />
<text x="2322.0" y="1573.8" font-size="31" fill="#555" text-anchor="middle" textLength="42.0" lengthAdjust="spacingAndGlyphs" >0.3</text>
<line x1="2593.7" y1="1187.7" x2="2593.7" y2="1506.8" stroke="#707070" stroke-width="2.6" stroke-dasharray="9.5 12.5" />
<line x1="2593.7" y1="1519.3" x2="2593.7" y2="1538.3" stroke="#707070" stroke-width="2.6" />
<text x="2593.7" y="1573.8" font-size="31" fill="#555" text-anchor="middle" textLength="42.0" lengthAdjust="spacingAndGlyphs" >0.4</text>
<line x1="186.0" y1="1344.8" x2="2807.5" y2="1344.8" stroke="#707070" stroke-width="2.6" />
<line x1="162.0" y1="1344.8" x2="176.0" y2="1344.8" stroke="#707070" stroke-width="2.6" />
<rect x="190.6" y="1191.7" width="2616.9" height="315.0999999999999" fill="none" stroke="#707070" stroke-width="2.8"/>
<text x="161.5" y="1358.0" font-size="31" fill="#555" text-anchor="end" textLength="17.0" lengthAdjust="spacingAndGlyphs" >0</text>
<text x="1499.5" y="1627.0" font-size="31" fill="#555" font-weight="bold" text-anchor="middle" textLength="71.0" lengthAdjust="spacingAndGlyphs" >Real</text>
<text transform="translate(63,1349) rotate(-90)" font-size="31" font-weight="bold" fill="#555" text-anchor="middle" textLength="160" lengthAdjust="spacingAndGlyphs">Imaginary</text>
<ellipse cx="1489.3" cy="1292.6" rx="100.5" ry="100.8" fill="none" stroke="#ff0000" stroke-width="2.8"/>
<polyline points="1402.1,1343.0 1401.1,1341.1 1400.0,1339.1 1399.1,1337.2 1398.1,1335.2 1397.2,1333.2 1396.4,1331.2 1395.6,1329.1 1394.8,1327.1 1394.1,1325.0 1393.4,1322.9 1392.8,1320.8 1392.2,1318.7 1391.7,1316.6 1391.2,1314.4 1390.7,1312.3 1390.3,1310.1 1390.0,1307.9 1389.7,1305.8 1389.4,1303.6 1389.2,1301.4 1389.0,1299.2 1388.9,1297.0 1388.8,1294.8 1388.8,1292.6 1388.8,1290.4 1388.9,1288.2 1389.0,1286.0 1389.2,1283.8 1389.4,1281.6 1389.7,1279.4 1390.0,1277.3 1390.3,1275.1 1390.7,1272.9 1391.2,1270.8 1391.7,1268.6 1392.2,1266.5 1392.8,1264.4 1393.4,1262.3 1394.1,1260.2 1394.8,1258.1" fill="none" stroke="#ff0000" stroke-width="7" stroke-linejoin="round" />
<polyline points="1565.9,1227.8 1567.7,1230.0 1569.4,1232.3 1571.1,1234.6 1572.7,1237.0 1574.2,1239.4 1575.7,1241.8 1577.1,1244.3 1578.4,1246.8 1579.7,1249.4 1580.8,1252.0 1581.9,1254.6 1583.0,1257.3 1583.9,1260.0 1584.8,1262.7 1585.6,1265.5 1586.3,1268.2 1587.0,1271.0 1587.5,1273.8 1588.0,1276.6 1588.4,1279.4 1588.8,1282.3 1589.0,1285.1 1589.2,1288.0 1589.3,1290.8 1589.3,1293.7 1589.2,1296.6 1589.1,1299.4 1588.8,1302.3 1588.5,1305.1 1588.1,1307.9 1587.7,1310.8 1587.1,1313.6 1586.5,1316.3 1585.8,1319.1 1585.0,1321.9 1584.1,1324.6 1583.2,1327.3 1582.2,1330.0 1581.1,1332.6 1579.9,1335.2" fill="none" stroke="#ff0000" stroke-width="7.5" stroke-linejoin="round" />
<polyline points="1394.9,1258.1 1396.8,1253.2 1399.0,1248.4 1401.4,1243.7 1404.1,1239.2 1407.0,1234.8 1410.1,1230.5 1413.5,1226.5 1417.0,1222.6 1420.8,1218.9 1424.7,1215.4 1428.8,1212.1 1433.1,1209.0 1437.5,1206.2 1442.1,1203.6 1446.8,1201.2 1451.7,1199.1 1456.6,1197.3 1461.6,1195.7 1466.7,1194.4 1471.8,1193.3 1477.1,1192.6 1482.3,1192.0 1487.5,1191.8 1492.8,1191.9 1498.1,1192.2 1503.3,1192.8 1508.5,1193.7 1513.6,1194.8 1518.7,1196.2 1523.7,1197.9 1528.6,1199.8 1533.4,1202.0 1538.0,1204.4 1542.6,1207.1 1546.9,1210.0 1551.2,1213.2 1555.2,1216.5 1559.1,1220.1 1562.8,1223.9 1566.3,1227.8" fill="none" stroke="#ff0000" stroke-width="4.5" stroke-linejoin="round" />
<polyline points="1572.8,1333.2 1572.3,1334.2 1571.8,1335.2 1571.4,1336.2 1570.9,1337.1 1570.4,1338.1 1569.9,1339.1 1569.4,1340.0 1568.9,1341.0 1568.3,1341.9 1567.8,1342.9 1567.2,1343.8 1566.7,1344.8 1566.1,1345.7 1565.5,1346.6 1564.9,1347.5 1564.3,1348.4 1563.7,1349.3 1563.1,1350.2 1562.5,1351.1 1561.9,1352.0 1561.2,1352.8 1560.6,1353.7 1559.9,1354.5 1559.2,1355.4 1558.5,1356.2 1557.9,1357.1 1557.2,1357.9 1556.4,1358.7 1555.7,1359.5 1555.0,1360.3 1554.3,1361.1 1553.5,1361.9 1552.8,1362.6 1552.0,1363.4 1551.3,1364.2 1550.5,1364.9 1549.7,1365.7 1548.9,1366.4 1548.1,1367.1 1547.3,1367.8" fill="none" stroke="#ff0000" stroke-width="5" stroke-linejoin="round" />
<polyline points="1440,1197 1452,1196 1466,1201 1478,1199 1488,1193 1505,1192" fill="none" stroke="#ff0000" stroke-width="4" stroke-linejoin="round" />
<line x1="1459.4" y1="1393.0" x2="1506.7" y2="1393.0" stroke="#ff0000" stroke-width="2.8" />
<ellipse cx="1517" cy="1414.4" rx="92.5" ry="91.6" fill="none" stroke="#00ff00" stroke-width="2.8"/>
<polyline points="1501.1,1503.6 1496.6,1502.7 1492.2,1501.6 1487.8,1500.3 1483.5,1498.7 1479.2,1496.9 1475.1,1494.9 1471.1,1492.8 1467.2,1490.4 1463.4,1487.8 1459.7,1485.1 1456.2,1482.1 1452.9,1479.0 1449.7,1475.8 1446.7,1472.3 1443.8,1468.8 1441.1,1465.1 1438.7,1461.2 1436.4,1457.3 1434.3,1453.2 1432.5,1449.1 1430.8,1444.8 1429.4,1440.5 1428.2,1436.1 1427.2,1431.7 1426.4,1427.2 1425.9,1422.7 1425.6,1418.2 1425.5,1413.6 1425.7,1409.1 1426.0,1404.5 1426.7,1400.0 1427.5,1395.6 1428.6,1391.1 1429.9,1386.8 1431.4,1382.5 1433.1,1378.3 1435.0,1374.2 1437.2,1370.1 1439.5,1366.2 1442.0,1362.4" fill="none" stroke="#00ff00" stroke-width="6" stroke-linejoin="round" />
<polyline points="1596.2,1369.1 1598.0,1372.2 1599.6,1375.4 1601.1,1378.6 1602.4,1381.9 1603.6,1385.3 1604.7,1388.7 1605.7,1392.1 1606.5,1395.6 1607.2,1399.1 1607.7,1402.6 1608.1,1406.1 1608.4,1409.7 1608.5,1413.2 1608.5,1416.8 1608.3,1420.3 1608.0,1423.9 1607.6,1427.4 1607.0,1430.9 1606.2,1434.4 1605.4,1437.8 1604.4,1441.3 1603.3,1444.6 1602.0,1448.0 1600.6,1451.3 1599.1,1454.5 1597.4,1457.6 1595.6,1460.7 1593.7,1463.7 1591.7,1466.7 1589.6,1469.6 1587.3,1472.3 1585.0,1475.0 1582.5,1477.6 1580.0,1480.1 1577.3,1482.5 1574.6,1484.8 1571.7,1487.0 1568.8,1489.1 1565.8,1491.0 1562.8,1492.9" fill="none" stroke="#00ff00" stroke-width="5.5" stroke-linejoin="round" />
<polyline points="1525,1505.5 1540,1495 1552,1485.5 1558,1487 1568,1493 1571,1494 1580,1484" fill="none" stroke="#00ff00" stroke-width="4" stroke-linejoin="round" />
<ellipse cx="1484.2" cy="1394" rx="27.4" ry="28" fill="none" stroke="#0000ff" stroke-width="2.8"/>
<polyline points="1475.3,1369.1 1477.0,1368.6 1478.6,1368.1 1480.3,1367.8 1481.9,1367.6 1483.6,1367.5 1485.3,1367.5 1487.0,1367.7 1488.7,1367.9 1490.4,1368.3 1492.0,1368.7 1493.6,1369.3 1495.1,1370.0 1496.7,1370.8 1498.1,1371.7 1499.5,1372.6 1500.8,1373.7 1502.1,1374.9 1503.3,1376.1 1504.4,1377.4 1505.4,1378.8 1506.3,1380.3 1507.2,1381.8 1507.9,1383.3 1508.5,1384.9 1509.1,1386.6 1509.5,1388.3 1509.8,1390.0 1510.0,1391.7 1510.1,1393.4 1510.1,1395.2 1509.9,1396.9 1509.7,1398.6 1509.4,1400.3 1508.9,1402.0 1508.3,1403.6 1507.7,1405.2 1506.9,1406.7 1506.0,1408.2 1505.1,1409.7 1504.0,1411.0" fill="none" stroke="#0000ff" stroke-width="6.5" stroke-linejoin="round" />
<rect x="190.4" y="1655" width="2617" height="292.5" fill="#fdfdfd" stroke="#9a9a9a" stroke-width="2.8"/>
<rect x="216.8" y="1801.7" width="2565.0" height="59.1" fill="#dcdcdc" />
<rect x="216.8" y="1681.6" width="119.4" height="58.2" rx="6" fill="#ececec" stroke="#8a8a8a" stroke-width="3"/>
<path d="M255,1692 H280 V1699 H269 V1721 H255 Z" fill="#5c5c5c" />
<path d="M270,1699.5 H286 L296.5,1710 V1729 H270 Z" fill="#5c5c5c" />
<path d="M286,1699.5 V1710 H296.5 Z" fill="#9a9a9a" />
<text x="615.8" y="1726.0" font-size="37" fill="#000" font-weight="bold" textLength="310.6" lengthAdjust="spacingAndGlyphs" >Natura...quency</text>
<text x="946.5" y="1726.0" font-size="37" fill="#000" font-weight="bold" textLength="205.0" lengthAdjust="spacingAndGlyphs" >Loss factor</text>
<rect x="221.6" y="1755.5" width="33.0" height="31.5" fill="#ff0000" rx="11" />
<text x="262.3" y="1786.5" font-size="36" fill="#000" font-weight="bold" textLength="334.2" lengthAdjust="spacingAndGlyphs" >100X+/1...m/s<tspan dy="-11" font-size="22">2</tspan><tspan dy="11">/N]</tspan></text>
<line x1="612.5" y1="1743.5" x2="612.5" y2="1792.5" stroke="#dddddd" stroke-width="2.5" />
<line x1="944.0" y1="1743.5" x2="944.0" y2="1792.5" stroke="#dddddd" stroke-width="2.5" />
<text x="926.4" y="1786.5" font-size="35.5" fill="#111" text-anchor="end" textLength="211.4" lengthAdjust="spacingAndGlyphs" >599.7895Hz</text>
<text x="1274.3" y="1786.5" font-size="35.5" fill="#111" text-anchor="end" textLength="112.0" lengthAdjust="spacingAndGlyphs" >5.07%</text>
<rect x="221.6" y="1816.0" width="33.0" height="31.5" fill="#00ff00" rx="11" />
<text x="262.3" y="1847.0" font-size="36" fill="#000" font-weight="bold" textLength="334.2" lengthAdjust="spacingAndGlyphs" >100Y+/1...m/s<tspan dy="-11" font-size="22">2</tspan><tspan dy="11">/N]</tspan></text>
<line x1="612.5" y1="1804.0" x2="612.5" y2="1853.0" stroke="#ffffff" stroke-width="2.5" />
<line x1="944.0" y1="1804.0" x2="944.0" y2="1853.0" stroke="#ffffff" stroke-width="2.5" />
<text x="926.4" y="1847.0" font-size="35.5" fill="#111" text-anchor="end" textLength="211.4" lengthAdjust="spacingAndGlyphs" >599.3875Hz</text>
<text x="1274.3" y="1847.0" font-size="35.5" fill="#111" text-anchor="end" textLength="112.0" lengthAdjust="spacingAndGlyphs" >4.45%</text>
<rect x="221.6" y="1876.5" width="33.0" height="31.5" fill="#0000ff" rx="11" />
<text x="262.3" y="1907.5" font-size="36" fill="#000" font-weight="bold" textLength="334.2" lengthAdjust="spacingAndGlyphs" >100Z+/1...m/s<tspan dy="-11" font-size="22">2</tspan><tspan dy="11">/N]</tspan></text>
<line x1="612.5" y1="1864.5" x2="612.5" y2="1913.5" stroke="#dddddd" stroke-width="2.5" />
<line x1="944.0" y1="1864.5" x2="944.0" y2="1913.5" stroke="#dddddd" stroke-width="2.5" />
<text x="926.4" y="1907.5" font-size="35.5" fill="#111" text-anchor="end" textLength="211.4" lengthAdjust="spacingAndGlyphs" >598.9507Hz</text>
<text x="1274.3" y="1907.5" font-size="35.5" fill="#111" text-anchor="end" textLength="133.0" lengthAdjust="spacingAndGlyphs" >11.31%</text>
<rect x="2936.0" y="16.5" width="6.0" height="1413.0" fill="#d0d0d0" />
<path d="M2823,1250 V48 Q2824,30 2840,27.5 L2937,17 V1250 Z" fill="#eeeeee" />
<rect x="2823.0" y="40.0" width="3.0" height="1030.0" fill="#c6c6c6" />
<path d="M2823,1192 Q2826,1203 2840,1206.5 L2920,1225 Q2934,1229 2936.8,1246 L2938,1430 H2823 Z" fill="#ffffff" />
<path d="M2941,349 Q2938,359 2925,362 L2842,381 Q2823,385 2823,402 V470 Q2823,487 2842,492 L2922,513.5 Q2936,518 2938,532 H2941 Z" fill="#d0d0d0" />
<path d="M2941,349 Q2938,359 2925,362 L2842,381 Q2823,385 2823,402 V470 Q2823,487 2842,492 L2922,513.5 Q2936,518 2938,532" fill="none" stroke="#bdbdbd" stroke-width="2" />
<path d="M2823.5,1069 Q2826,1076 2838,1078.5 L2915,1096 Q2932,1100 2938,1108 V1250 L2936.8,1246 Q2934,1229 2920,1225 L2840,1206.5 Q2826,1203 2823.5,1192 Z" fill="#5a5a5a" />
<line x1="2850.0" y1="150.6" x2="2910.0" y2="150.6" stroke="#cfcfcf" stroke-width="2.5" />
<line x1="2850.0" y1="267.6" x2="2910.0" y2="267.6" stroke="#cfcfcf" stroke-width="2.5" />
<line x1="2850.0" y1="621.5" x2="2910.0" y2="621.5" stroke="#cfcfcf" stroke-width="2.5" />
<line x1="2850.0" y1="739.6" x2="2910.0" y2="739.6" stroke="#cfcfcf" stroke-width="2.5" />
<line x1="2850.0" y1="857.4" x2="2910.0" y2="857.4" stroke="#cfcfcf" stroke-width="2.5" />
<line x1="2850.0" y1="975.4" x2="2910.0" y2="975.4" stroke="#cfcfcf" stroke-width="2.5" />
<path d="M2899.1,81.7 L2905.8,82.9 L2905.8,88.7 L2899.1,89.9 L2896.4,96.4 L2900.3,102.1 L2896.3,106.1 L2890.6,102.2 L2884.1,104.9 L2882.9,111.6 L2877.1,111.6 L2875.9,104.9 L2869.4,102.2 L2863.7,106.1 L2859.7,102.1 L2863.6,96.4 L2860.9,89.9 L2854.2,88.7 L2854.2,82.9 L2860.9,81.7 L2863.6,75.2 L2859.7,69.5 L2863.7,65.5 L2869.4,69.4 L2875.9,66.7 L2877.1,60.0 L2882.9,60.0 L2884.1,66.7 L2890.6,69.4 L2896.3,65.5 L2900.3,69.5 L2896.4,75.2 Z M2894,85.8 A14,14 0 1,0 2866,85.8 A14,14 0 1,0 2894,85.8 Z" fill="#5a5a5a" fill-rule="evenodd" stroke="#5a5a5a" stroke-width="3" stroke-linejoin="round"/>
<circle cx="2880" cy="85.8" r="9.2" fill="#5a5a5a"/>
<rect x="2850" y="184.8" width="10.5" height="8.4" rx="4.2" fill="#5a5a5a"/>
<rect x="2865" y="184.8" width="45.5" height="8.4" rx="4.2" fill="#5a5a5a"/>
<rect x="2850" y="199.8" width="10.5" height="8.4" rx="4.2" fill="#5a5a5a"/>
<rect x="2865" y="199.8" width="45.5" height="8.4" rx="4.2" fill="#5a5a5a"/>
<rect x="2850" y="214.4" width="10.5" height="8.4" rx="4.2" fill="#5a5a5a"/>
<rect x="2865" y="214.4" width="45.5" height="8.4" rx="4.2" fill="#5a5a5a"/>
<circle cx="2880" cy="321.3" r="28.3" fill="none" stroke="#5a5a5a" stroke-width="4"/>
<path d="M2858,320 A22,22 0 0 1 2895,304.5 L2887,312 A11,11 0 0 0 2869,320 Z" fill="#5a5a5a" />
<line x1="2880.0" y1="323.0" x2="2895.0" y2="309.0" stroke="#5a5a5a" stroke-width="4" stroke-linecap="round"/>
<circle cx="2880" cy="323" r="4" fill="#5a5a5a"/>
<rect x="2852.5" y="412" width="41" height="54" rx="2" fill="none" stroke="#0f5fc5" stroke-width="5"/>
<line x1="2860.0" y1="423.5" x2="2889.0" y2="423.5" stroke="#0f5fc5" stroke-width="4" />
<line x1="2860.0" y1="434.0" x2="2883.0" y2="434.0" stroke="#0f5fc5" stroke-width="4" />
<line x1="2860.0" y1="444.5" x2="2871.0" y2="444.5" stroke="#0f5fc5" stroke-width="4" />
<path d="M2874,447 L2882,447 L2886,452 L2908,464 L2904,470 L2882,458 L2874,457 Z" fill="#0f5fc5" />
<path d="M2844.5,489 L2855,483.3 V494.7 Z" fill="#0f5fc5" />
<rect x="2858.0" y="483.5" width="4.5" height="11.0" fill="#0f5fc5" />
<rect x="2866.0" y="483.5" width="4.5" height="11.0" fill="#0f5fc5" />
<path d="M2916,489 L2905.5,483.3 V494.7 Z" fill="#0f5fc5" />
<rect x="2898.0" y="483.5" width="4.5" height="11.0" fill="#0f5fc5" />
<rect x="2890.0" y="483.5" width="4.5" height="11.0" fill="#0f5fc5" />
<path d="M2880,532 L2903,530 L2888,551 L2901,550 L2859,584.4 L2874,558 L2858,560 Z" fill="#5a5a5a" />
<path d="M2863.5,646 L2896.6,665 L2869,678 L2868.5,704 L2863.5,704 Z" fill="#5a5a5a" />
<path d="M2861,780.2 H2849 V818 H2897.6 V809.4" fill="none" stroke="#5a5a5a" stroke-width="5.4" stroke-linejoin="round" stroke-linecap="round"/>
<path d="M2912.7,785.6 L2892.2,766.2 V776 Q2866,778 2861.5,804.5 Q2872,793.5 2892.2,794.5 V805 Z" fill="#5a5a5a" stroke="#5a5a5a" stroke-width="1.5" stroke-linejoin="round"/>
<path d="M2860,883.8 H2900 Q2905.5,883.8 2907.2,889 L2913.1,906.5 V940.5 Q2913.1,943.2 2910.4,943.2 H2904.6 Q2902,943.2 2902,940.5 V935.6 H2858 V940.5 Q2858,943.2 2855.3,943.2 H2849.6 Q2846.9,943.2 2846.9,940.5 V906.5 L2852.8,889 Q2854.5,883.8 2860,883.8 Z M2861,891.4 L2855.5,906.5 H2904.5 L2899,891.4 Z" fill="#5a5a5a" fill-rule="evenodd"/>
<circle cx="2859.8" cy="920" r="4.8" fill="#eee"/><circle cx="2900.4" cy="920" r="4.8" fill="#eee"/>
<g transform="translate(2855.5,1001.5) scale(1.0)" stroke="#5a5a5a" fill="none"><path d="M1.5,51 L7,47 L6,44 L13,40 L12,37 L19,33 L18,30 L25,26 L24,23 L32,18.5" stroke-width="5.6" stroke-linejoin="round"/><line x1="4.5" y1="1.5" x2="4.5" y2="48" stroke-width="2.6"/><line x1="12" y1="11" x2="12" y2="42" stroke-width="2.6"/><line x1="19" y1="19" x2="19" y2="34" stroke-width="2.2"/><path d="M31,31.5 h3.2 M37,31.5 h3.2 M43,31.5 h3.2" stroke-width="4.5"/><rect x="27.5" y="4.5" width="23" height="11" rx="5.5" transform="rotate(36 39 10)" stroke-width="3.4" fill="#eee"/><circle cx="39" cy="10" r="3.2" fill="#5a5a5a" stroke="none"/></g>
<path d="M2880,1127 L2903.5,1167 H2856.5 Z" fill="#fff" stroke="#fff" stroke-width="13" stroke-linejoin="round"/>
<path d="M2880,1135 L2895.5,1159 H2864.5 Z" fill="#5a5a5a" />
<circle cx="2916" cy="1110" r="21.7" fill="#ff0000"/>
<text x="2916.0" y="1123.5" font-size="37" fill="#fff" text-anchor="middle" textLength="18.0" lengthAdjust="spacingAndGlyphs" >2</text>
<rect x="2941.0" y="16.5" width="848.4" height="1412.2" fill="#d0d0d0" />
<rect x="2937.5" y="16.5" width="3.2" height="333.0" fill="#a4a4a4" />
<rect x="2937.5" y="532.0" width="3.2" height="897.0" fill="#a4a4a4" />
<rect x="2951.0" y="28.3" width="823.0" height="82.6" fill="#e0e0e0" />
<text x="3246.8" y="86.3" font-size="41" fill="#1565c0" font-weight="bold" textLength="231.2" lengthAdjust="spacingAndGlyphs" stroke="#d0d0d0" stroke-width="0.8">Nyquist Plot</text>
<text x="2980.2" y="194.4" font-size="40" fill="#1565c0" font-weight="bold" textLength="195.8" lengthAdjust="spacingAndGlyphs" stroke="#d0d0d0" stroke-width="0.8">Properties</text>
<text x="3228.9" y="194.4" font-size="40" fill="#000" font-weight="bold" textLength="171.0" lengthAdjust="spacingAndGlyphs" stroke="#d0d0d0" stroke-width="0.6">Channels</text>
<rect x="2951.0" y="214.5" width="823.0" height="3.2" fill="#8a8a8a" />
<rect x="2978.8" y="206.7" width="197.2" height="8.0" fill="#1565c0" />
<text x="2951.5" y="312.8" font-size="40" fill="#000" font-weight="bold" textLength="377.0" lengthAdjust="spacingAndGlyphs" >FREQUENCY RANGE</text>
<text x="2966.0" y="386.9" font-size="39.5" fill="#000" textLength="339.7" lengthAdjust="spacingAndGlyphs" >Manually specified</text>
<path d="M2952,389 V401 H3773 V389" fill="none" stroke="#8a8a8a" stroke-width="2.8" />
<path d="M3768,377.5 V398.7 H3744.5 Z" fill="#9a9a9a" />
<text x="2951.5" y="464.7" font-size="39.5" fill="#000" textLength="318.9" lengthAdjust="spacingAndGlyphs" >Center frequency</text>
<path d="M3305.5,469.3 V481.3 H3773 V469.3" fill="none" stroke="#8a8a8a" stroke-width="2.8" />
<text x="3322.3" y="464.7" font-size="39.5" fill="#000" textLength="63.7" lengthAdjust="spacingAndGlyphs" >600</text>
<text x="3715.3" y="464.7" font-size="39.5" fill="#999" textLength="42.5" lengthAdjust="spacingAndGlyphs" >Hz</text>
<text x="2951.5" y="581.3" font-size="40" fill="#000" font-weight="bold" textLength="424.0" lengthAdjust="spacingAndGlyphs" >FITTING PARAMETERS</text>
<text x="2951.5" y="654.9" font-size="39.5" fill="#000" textLength="222.2" lengthAdjust="spacingAndGlyphs" >Circle fitting</text>
<rect x="3304.8" y="607.2" width="469.2" height="63.0" fill="#b9c4d3" />
<path d="M3305.5,658 V670 H3773 V658" fill="none" stroke="#1565c0" stroke-width="3.6" />
<path d="M3768,645.5 V667 H3744.5 Z" fill="#1565c0" />
<text x="3319.0" y="654.9" font-size="39.5" fill="#000" textLength="327.4" lengthAdjust="spacingAndGlyphs" >Center and radius</text>
<text x="2951.5" y="770.7" font-size="40" fill="#000" font-weight="bold" textLength="233.5" lengthAdjust="spacingAndGlyphs" >VALUE AREA</text>
<rect x="2953.2" y="806.2" width="45.6" height="44.6" rx="6" fill="#ebebeb" stroke="#9a9a9a" stroke-width="2.6"/>
<text x="3017.2" y="845.0" font-size="39.5" fill="#000" textLength="326.5" lengthAdjust="spacingAndGlyphs" >Automatic scaling</text>
<text x="2951.5" y="960.2" font-size="40" fill="#000" font-weight="bold" textLength="114.8" lengthAdjust="spacingAndGlyphs" >STYLE</text>
<rect x="2953.2" y="995.2" width="45.6" height="44.6" rx="6" fill="#ebebeb" stroke="#9a9a9a" stroke-width="2.6"/>
<path d="M2962,1018 L2972.5,1028 L2990,1007" fill="none" stroke="#1565c0" stroke-width="4.6" />
<text x="3017.2" y="1033.5" font-size="39.5" fill="#000" textLength="458.8" lengthAdjust="spacingAndGlyphs" >Transparent background</text>
<text x="2951.5" y="1113.3" font-size="39.5" fill="#000" textLength="190.0" lengthAdjust="spacingAndGlyphs" >Line width</text>
<path d="M3305.5,1116.5 V1128.5 H3773 V1116.5" fill="none" stroke="#8a8a8a" stroke-width="2.8" />
<text x="3322.0" y="1113.3" font-size="39.5" fill="#000" textLength="19.0" lengthAdjust="spacingAndGlyphs" >2</text>
<text x="2951.5" y="1228.0" font-size="40" fill="#000" font-weight="bold" textLength="258.8" lengthAdjust="spacingAndGlyphs" >CROSS HAIRS</text>
<rect x="2953.2" y="1263.8" width="45.6" height="44.6" rx="6" fill="#ebebeb" stroke="#9a9a9a" stroke-width="2.6"/>
<path d="M2962,1286.6 L2972.5,1296.6 L2990,1275.6" fill="none" stroke="#1565c0" stroke-width="4.6" />
<text x="3017.2" y="1302.3" font-size="39.5" fill="#000" textLength="385.6" lengthAdjust="spacingAndGlyphs" >Use cursor cross hair</text>
<text x="2951.5" y="1382.2" font-size="39.5" fill="#000" textLength="190.0" lengthAdjust="spacingAndGlyphs" >Line width</text>
<path d="M3305.5,1385.3 V1397.3 H3773 V1385.3" fill="none" stroke="#8a8a8a" stroke-width="2.8" />
<text x="3324.0" y="1382.2" font-size="39.5" fill="#000" textLength="16.0" lengthAdjust="spacingAndGlyphs" >1</text>
<rect x="2884.3" y="1428.7" width="1034.6" height="903.1" fill="#000" />
<rect x="2890.8" y="1436.5" width="1014.2" height="895.3" fill="#d0d0d0" />
<rect x="3905.0" y="1436.5" width="13.9" height="895.3" fill="#ffffff" />
<path d="M3909.4,2331.8 V1999 Q3909.4,1991.5 3919,1991.5 V2331.8 Z" fill="#555" />
<rect x="2901.7" y="1446.9" width="1003.3" height="79.3" fill="#565656" />
<text x="2935.0" y="1508.8" font-size="52" fill="#f2f2f2" textLength="338.0" lengthAdjust="spacingAndGlyphs" >Miscellaneous</text>
<path d="M3845,1479 L3860.6,1495 L3876.2,1479" fill="none" stroke="#fff" stroke-width="10" stroke-linejoin="miter"/>
<clipPath id="mc"><rect x="2890.8" y="1436.5" width="1014.2" height="895.3"/></clipPath>
<g clip-path="url(#mc)">
<rect x="2903.2" y="1548.5" width="504.9" height="241.9" fill="#eeeeee" stroke="#909090" stroke-width="3"/>
<rect x="3428.9" y="1548.5" width="504.9" height="241.9" fill="#eeeeee" stroke="#909090" stroke-width="3"/>
<rect x="2903.2" y="1813.2" width="504.9" height="241" fill="#eeeeee" stroke="#909090" stroke-width="3"/>
<rect x="3428.9" y="1813.2" width="504.9" height="241" fill="#eeeeee" stroke="#909090" stroke-width="3"/>
<rect x="3428.9" y="2077.5" width="504.9" height="242" fill="#eeeeee" stroke="#909090" stroke-width="3"/>
<rect x="2902.2" y="2076.6" width="506.9" height="245.2" fill="#eeeeee" stroke="#ff0000" stroke-width="14"/>
</g>
<text x="3156.5" y="1772.0" font-size="51" fill="#000" text-anchor="middle" textLength="121.3" lengthAdjust="spacingAndGlyphs" >Polar</text>
<text x="3679.7" y="1772.0" font-size="51" fill="#000" text-anchor="middle" textLength="290.4" lengthAdjust="spacingAndGlyphs" >Audio player</text>
<text x="3153.9" y="2037.0" font-size="51" fill="#000" text-anchor="middle" textLength="173.4" lengthAdjust="spacingAndGlyphs" >Control</text>
<text x="3679.2" y="2037.0" font-size="51" fill="#000" text-anchor="middle" textLength="239.3" lengthAdjust="spacingAndGlyphs" >ModalTest</text>
<text x="3155.2" y="2301.5" font-size="51" fill="#000" text-anchor="middle" textLength="173.4" lengthAdjust="spacingAndGlyphs" >Nyquist</text>
<text x="3680.8" y="2301.5" font-size="51" fill="#000" text-anchor="middle" textLength="119.2" lengthAdjust="spacingAndGlyphs" >Orbit</text>
<circle cx="3155.2" cy="1638.9" r="60" fill="none" stroke="#5e5e5e" stroke-width="2.6"/>
<circle cx="3155.2" cy="1638.9" r="51" fill="none" stroke="#5e5e5e" stroke-width="2.6"/>
<polyline points="3148.7,1679.2 3131.4,1617.2 3171.2,1621.5 3166.0,1648.4 3155.2,1639.7" fill="none" stroke="#5e5e5e" stroke-width="2.4" stroke-linejoin="round" />
<circle cx="3148.7" cy="1679.2" r="3" fill="#5e5e5e"/>
<circle cx="3131.4" cy="1617.2" r="3" fill="#5e5e5e"/>
<circle cx="3171.2" cy="1621.5" r="3" fill="#5e5e5e"/>
<circle cx="3166.0" cy="1648.4" r="3" fill="#5e5e5e"/>
<circle cx="3155.2" cy="1639.7" r="3" fill="#5e5e5e"/>
<path d="M3621.2,1617.2 H3647.2 L3686.2,1581.2 V1696.5 L3647.2,1658.4 H3621.2 Z" fill="#5e5e5e" />
<path d="M3697.7,1612.1 A40,40 0 0 1 3697.7,1665.7" fill="none" stroke="#5e5e5e" stroke-width="4.6" />
<path d="M3706.1,1596.5 A57,57 0 0 1 3706.1,1681.3" fill="none" stroke="#5e5e5e" stroke-width="4.6" />
<path d="M3713.6,1580.6 A74,74 0 0 1 3713.6,1697.2" fill="none" stroke="#5e5e5e" stroke-width="4.6" />
<path d="M3201.1,1893.9 L3214.7,1897.1 L3214.7,1910.1 L3201.1,1913.3 L3194.7,1928.6 L3202.1,1940.5 L3193.0,1949.6 L3181.1,1942.2 L3165.8,1948.6 L3162.6,1962.2 L3149.6,1962.2 L3146.4,1948.6 L3131.1,1942.2 L3119.2,1949.6 L3110.1,1940.5 L3117.5,1928.6 L3111.1,1913.3 L3097.5,1910.1 L3097.5,1897.1 L3111.1,1893.9 L3117.5,1878.6 L3110.1,1866.7 L3119.2,1857.6 L3131.1,1865.0 L3146.4,1858.6 L3149.6,1845.0 L3162.6,1845.0 L3165.8,1858.6 L3181.1,1865.0 L3193.0,1857.6 L3202.1,1866.7 L3194.7,1878.6 Z M3187.1,1903.6 A31,31 0 1,0 3125.1,1903.6 A31,31 0 1,0 3187.1,1903.6 Z" fill="#5e5e5e" fill-rule="evenodd" stroke="#5e5e5e" stroke-width="3" stroke-linejoin="round"/>
<path d="M3149,1889.5 L3170.5,1903.6 L3149,1917.7 Z" fill="#5e5e5e" />
<g transform="translate(3646.3,1848.5) scale(1.4)" stroke="#5e5e5e" fill="none"><path d="M1.5,51 L7,47 L6,44 L13,40 L12,37 L19,33 L18,30 L25,26 L24,23 L32,18.5" stroke-width="5.6" stroke-linejoin="round"/><line x1="4.5" y1="1.5" x2="4.5" y2="48" stroke-width="2.6"/><line x1="12" y1="11" x2="12" y2="42" stroke-width="2.6"/><line x1="19" y1="19" x2="19" y2="34" stroke-width="2.2"/><path d="M31,31.5 h3.2 M37,31.5 h3.2 M43,31.5 h3.2" stroke-width="4.5"/><rect x="27.5" y="4.5" width="23" height="11" rx="5.5" transform="rotate(36 39 10)" stroke-width="3.4" fill="#eee"/><circle cx="39" cy="10" r="3.2" fill="#5e5e5e" stroke="none"/></g>
<line x1="3079.4" y1="2130.0" x2="3079.4" y2="2220.0" stroke="#5e5e5e" stroke-width="13" />
<line x1="3073.0" y1="2213.5" x2="3222.0" y2="2213.5" stroke="#5e5e5e" stroke-width="13" />
<path d="M3079.4,2105.5 L3097.5,2137 H3061.3 Z" fill="#5e5e5e" />
<path d="M3248.4,2213.5 L3217,2231.5 V2195.5 Z" fill="#5e5e5e" />
<path d="M3131.5,2136 A32.5,32.5 0 1 0 3177.3,2136" fill="none" stroke="#5e5e5e" stroke-width="5.2" />
<circle cx="3681.8" cy="2168" r="54.5" fill="none" stroke="#5e5e5e" stroke-width="2.4"/>
<circle cx="3681.8" cy="2168" r="46.5" fill="none" stroke="#5e5e5e" stroke-width="2.4"/>
<line x1="3620.8" y1="2168.0" x2="3742.8" y2="2168.0" stroke="#5e5e5e" stroke-width="2.6" />
<line x1="3681.8" y1="2107.0" x2="3681.8" y2="2229.0" stroke="#5e5e5e" stroke-width="2.6" />
<ellipse cx="3681.8" cy="2168" rx="36" ry="17" fill="none" stroke="#5e5e5e" stroke-width="2.6" transform="rotate(58 3681.8 2168)"/>
<ellipse cx="3681.8" cy="2168" rx="30" ry="11" fill="none" stroke="#5e5e5e" stroke-width="2.4" transform="rotate(58 3681.8 2168)"/>
<path d="M2232.6,1437.2 C2247.8,1437.7 2285.2,1435.5 2323.6,1440.4 C2362.0,1445.3 2418.3,1455.9 2463.1,1466.7 C2507.9,1477.5 2552.1,1490.6 2592.5,1505.1 C2632.9,1519.6 2668.0,1535.8 2705.7,1553.7 C2743.4,1571.6 2788.9,1595.5 2818.9,1612.3 C2848.9,1629.1 2864.0,1639.6 2885.6,1654.8 C2907.2,1670.0 2927.7,1685.8 2948.3,1703.3 C2968.9,1720.8 2988.8,1738.3 3009,1759.9 C3029.2,1781.5 3051.4,1806.4 3069.6,1832.7 C3087.8,1859.0 3105.3,1889.7 3118.1,1917.6 C3130.9,1945.5 3140.2,1977.9 3146.4,2000 C3152.6,2022.1 3153.4,2038.0 3155.2,2050 C3157.0,2062.0 3157.0,2068.3 3157.4,2072" fill="none" stroke="#ff0000" stroke-width="8" />
<path d="M2206.2,1436.2 L2233.5,1422.6 V1450.4 Z" fill="#ff0000" />
</svg>
</body></html>
